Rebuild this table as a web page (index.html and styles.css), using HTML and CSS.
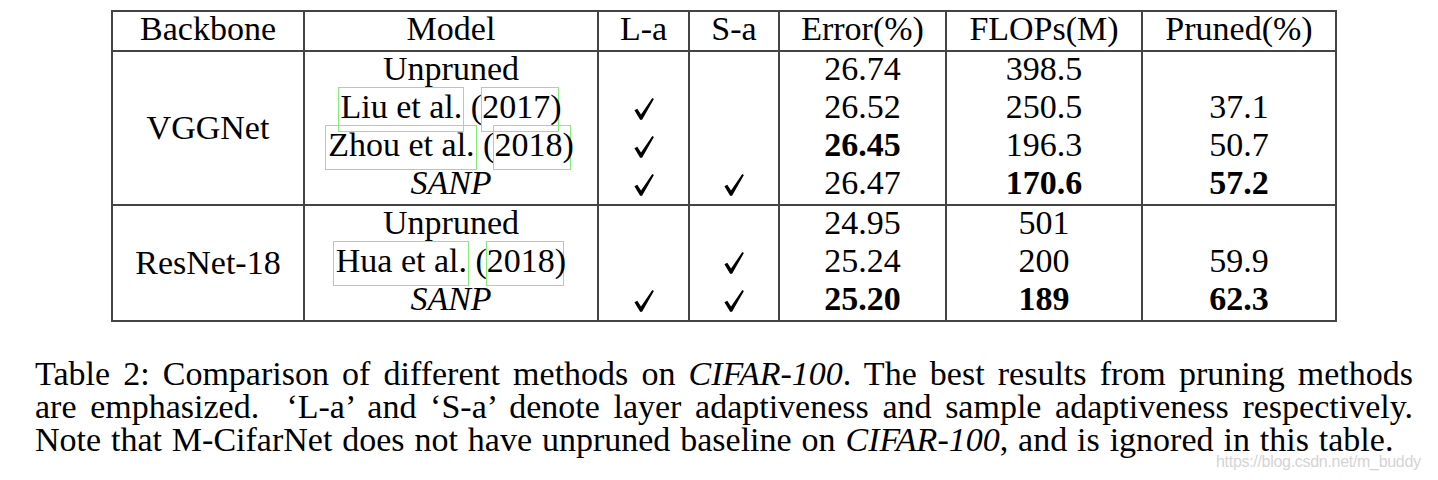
FILE: index.html
```html
<!DOCTYPE html>
<html lang="en">
<head>
    <meta charset="UTF-8">
    <title>Table 2: CIFAR-100 pruning comparison</title>
    <link rel="stylesheet" href="styles.css">
</head>
<body>

<!-- Results table -->
<table class="results">
    <colgroup>
        <col class="c-backbone">
        <col class="c-model">
        <col class="c-la">
        <col class="c-sa">
        <col class="c-error">
        <col class="c-flops">
        <col class="c-pruned">
    </colgroup>
    <thead>
        <tr>
            <th>Backbone</th>
            <th>Model</th>
            <th>L-a</th>
            <th>S-a</th>
            <th>Error(%)</th>
            <th>FLOPs(M)</th>
            <th>Pruned(%)</th>
        </tr>
    </thead>
    <tbody>
        <tr>
            <td rowspan="4" class="backbone">VGGNet</td>
            <td>Unpruned</td>
            <td></td>
            <td></td>
            <td>26.74</td>
            <td>398.5</td>
            <td></td>
        </tr>
        <tr>
            <td><span class="cite cite-name">Liu et al.</span> (<span class="cite cite-year">2017</span>)</td>
            <td><svg class="check" viewBox="0 0 20 22"><path d="M0.4 12.3 L3.3 10.8 L7.0 16.4 L18.3 0.1 L19.9 1.0 L8.1 21.8 L6.1 21.8 Z"/></svg></td>
            <td></td>
            <td>26.52</td>
            <td>250.5</td>
            <td>37.1</td>
        </tr>
        <tr>
            <td><span class="cite cite-name">Zhou et al.</span> (<span class="cite cite-year">2018</span>)</td>
            <td><svg class="check" viewBox="0 0 20 22"><path d="M0.4 12.3 L3.3 10.8 L7.0 16.4 L18.3 0.1 L19.9 1.0 L8.1 21.8 L6.1 21.8 Z"/></svg></td>
            <td></td>
            <td><b>26.45</b></td>
            <td>196.3</td>
            <td>50.7</td>
        </tr>
        <tr>
            <td><i>SANP</i></td>
            <td><svg class="check" viewBox="0 0 20 22"><path d="M0.4 12.3 L3.3 10.8 L7.0 16.4 L18.3 0.1 L19.9 1.0 L8.1 21.8 L6.1 21.8 Z"/></svg></td>
            <td><svg class="check" viewBox="0 0 20 22"><path d="M0.4 12.3 L3.3 10.8 L7.0 16.4 L18.3 0.1 L19.9 1.0 L8.1 21.8 L6.1 21.8 Z"/></svg></td>
            <td>26.47</td>
            <td><b>170.6</b></td>
            <td><b>57.2</b></td>
        </tr>
    </tbody>
    <tbody>
        <tr>
            <td rowspan="3" class="backbone">ResNet-18</td>
            <td>Unpruned</td>
            <td></td>
            <td></td>
            <td>24.95</td>
            <td>501</td>
            <td></td>
        </tr>
        <tr>
            <td><span class="cite cite-name">Hua et al.</span> (<span class="cite cite-year">2018</span>)</td>
            <td></td>
            <td><svg class="check" viewBox="0 0 20 22"><path d="M0.4 12.3 L3.3 10.8 L7.0 16.4 L18.3 0.1 L19.9 1.0 L8.1 21.8 L6.1 21.8 Z"/></svg></td>
            <td>25.24</td>
            <td>200</td>
            <td>59.9</td>
        </tr>
        <tr>
            <td><i>SANP</i></td>
            <td><svg class="check" viewBox="0 0 20 22"><path d="M0.4 12.3 L3.3 10.8 L7.0 16.4 L18.3 0.1 L19.9 1.0 L8.1 21.8 L6.1 21.8 Z"/></svg></td>
            <td><svg class="check" viewBox="0 0 20 22"><path d="M0.4 12.3 L3.3 10.8 L7.0 16.4 L18.3 0.1 L19.9 1.0 L8.1 21.8 L6.1 21.8 Z"/></svg></td>
            <td><b>25.20</b></td>
            <td><b>189</b></td>
            <td><b>62.3</b></td>
        </tr>
    </tbody>
</table>

<!-- Caption -->
<p class="caption">
    <span class="line">Table 2: Comparison of different methods on <i>CIFAR-100</i>. The best results from pruning methods</span>
    <span class="line">are emphasized. &nbsp;&lsquo;L-a&rsquo; and &lsquo;S-a&rsquo; denote layer adaptiveness and sample adaptiveness respectively.</span>
    <span class="line last">Note that M-CifarNet does not have unpruned baseline on <i>CIFAR-100</i>, and is ignored in this table.</span>
</p>

<div class="watermark">https://blog.csdn.net/m_buddy</div>

</body>
</html>
```

FILE: styles.css
```css
body {
    margin: 0;
    padding: 0;
    background-color: #fff;
    color: #000;
    font-family: "Liberation Serif", "Times New Roman", serif;
    position: relative;
    height: 480px;
    overflow: hidden;
}

.results {
    border-collapse: collapse;
    table-layout: fixed;
    margin: 10px 0 0 111px;
    width: 1225px;
    border: 2px solid #444;
    font-size: 34px;
}
.c-backbone { width: 192px; }
.c-model { width: 294px; }
.c-la { width: 91px; }
.c-sa { width: 90px; }
.c-error { width: 167px; }
.c-flops { width: 196px; }
.c-pruned { width: 194px; }

.results th,
.results td {
    padding: 0;
    text-align: center;
    white-space: nowrap;
    border-left: 2px solid #444;
    border-right: 2px solid #444;
}
.results th {
    font-weight: normal;
    height: 38px;
    line-height: 34px;
    vertical-align: top;
    border-bottom: 2px solid #444;
}
.results td {
    height: 38px;
    line-height: 34px;
    vertical-align: top;
}
.results tbody {
    border-top: 2px solid #444;
}
.results td.backbone {
    vertical-align: middle;
}

/* hyperref style link boxes */
.cite {
    border: 1px solid #86ee76;
    padding-top: 0;
    padding-bottom: 6px;
}
.cite-name {
    padding-left: 2px;
    padding-right: 1px;
    margin-left: -3px;
    margin-right: -2px;
}
.cite-year {
    padding-left: 0;
    padding-right: 8px;
    margin-left: -1px;
    margin-right: -9px;
}

.check {
    display: inline-block;
    width: 20px;
    height: 22px;
    vertical-align: -2px;
    fill: #000;
}

.caption {
    margin: 35px 0 0 35px;
    width: 1378px;
    font-size: 34px;
    line-height: 33px;
    text-align: justify;
}
.caption .line {
    display: block;
    white-space: nowrap;
    text-align-last: justify;
}
.caption .line.last {
    text-align-last: left;
    word-spacing: 1.4px;
}

.watermark {
    position: absolute;
    left: 1216px;
    top: 453px;
    font-family: "Liberation Sans", Arial, sans-serif;
    font-size: 16px;
    color: #d4d4d4;
    letter-spacing: -0.3px;
}
```
